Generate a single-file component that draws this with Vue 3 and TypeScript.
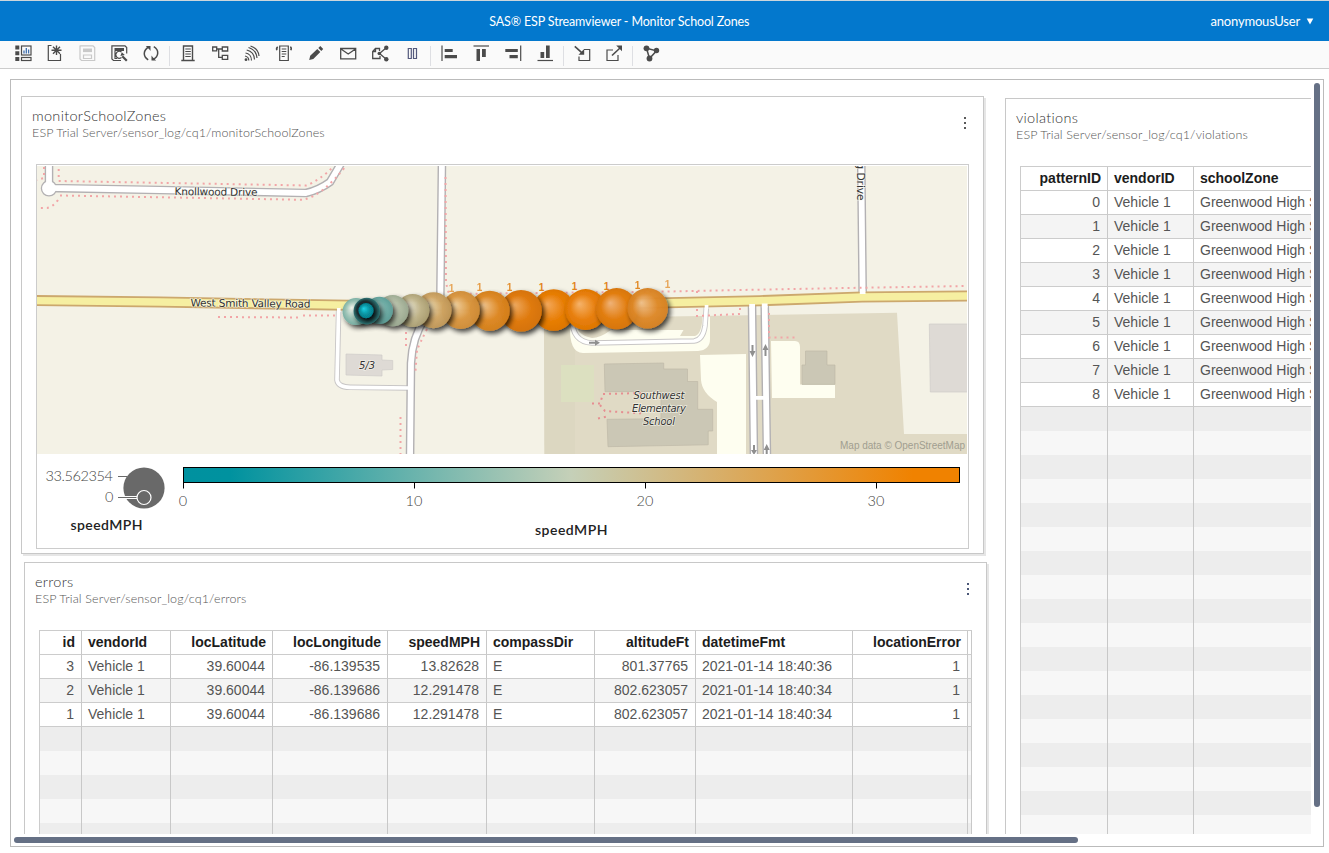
<script setup lang="ts">
interface Column { name: string; width: number; numeric: boolean }
interface Ball { x: number; y: number; r: number; light: string; base: string; edge: string; opacity: number }

const errorColumns: Column[] = [
  { name: 'id', width: 42, numeric: true },
  { name: 'vendorId', width: 89, numeric: false },
  { name: 'locLatitude', width: 102, numeric: true },
  { name: 'locLongitude', width: 115, numeric: true },
  { name: 'speedMPH', width: 99, numeric: true },
  { name: 'compassDir', width: 108, numeric: false },
  { name: 'altitudeFt', width: 101, numeric: true },
  { name: 'datetimeFmt', width: 157, numeric: false },
  { name: 'locationError', width: 115, numeric: true },
]
const errorRows: string[][] = [
  ['3', 'Vehicle 1', '39.60044', '-86.139535', '13.82628', 'E', '801.37765', '2021-01-14 18:40:36', '1'],
  ['2', 'Vehicle 1', '39.60044', '-86.139686', '12.291478', 'E', '802.623057', '2021-01-14 18:40:34', '1'],
  ['1', 'Vehicle 1', '39.60044', '-86.139686', '12.291478', 'E', '802.623057', '2021-01-14 18:40:34', '1'],
]
const violationColumns: Column[] = [
  { name: 'patternID', width: 87, numeric: true },
  { name: 'vendorID', width: 86, numeric: false },
  { name: 'schoolZone', width: 220, numeric: false },
]
const violationRows: string[][] = Array.from({ length: 9 }, (_, i) => [String(i), 'Vehicle 1', 'Greenwood High School'])

const balls: Ball[] = [
  { x: 553.7, y: 310, r: 20.8, light: '#f3a85a', base: '#e87e06', edge: '#dd7500', opacity: 1 },
  { x: 521, y: 310.7, r: 20.8, light: '#eea95f', base: '#df7a0e', edge: '#d47208', opacity: 1 },
  { x: 489.7, y: 310.7, r: 20, light: '#efc28c', base: '#dd8722', edge: '#d27e1c', opacity: 0.98 },
  { x: 460.7, y: 310, r: 19, light: '#efcf9f', base: '#da963f', edge: '#cc8a36', opacity: 0.97 },
  { x: 433.5, y: 310.2, r: 18, light: '#ecdcb8', base: '#cfa564', edge: '#bd9556', opacity: 0.97 },
  { x: 412.7, y: 310.5, r: 16.6, light: '#e9e6d6', base: '#bfb48a', edge: '#a89c70', opacity: 0.97 },
  { x: 392.7, y: 310.7, r: 15.6, light: '#e4e8dc', base: '#b0bca4', edge: '#98a68e', opacity: 0.97 },
  { x: 379.3, y: 310.3, r: 13.6, light: '#b9dad5', base: '#6eada6', edge: '#5b9c96', opacity: 0.97 },
  { x: 356, y: 311.5, r: 13.5, light: '#f2f3ec', base: '#9cc4b7', edge: '#72aba0', opacity: 0.97 },
  { x: 366.7, y: 311, r: 13.2, light: '#0c2226', base: '#14262a', edge: '#2a7a7a', opacity: 0.95 },
  { x: 366, y: 310.6, r: 7.6, light: '#1fd2e4', base: '#0792a0', edge: '#067e8b', opacity: 1 },
  { x: 585.7, y: 309.5, r: 20.4, light: '#f5b36b', base: '#e87f0d', edge: '#dd7500', opacity: 1 },
  { x: 616.7, y: 308.7, r: 20.6, light: '#efb277', base: '#e27e11', edge: '#d67508', opacity: 1 },
  { x: 647.7, y: 308.3, r: 20.2, light: '#efc08c', base: '#de8828', edge: '#d37e1e', opacity: 0.96 },
]
const countMarks = [
  { x: 451.5, y: 292, o: 0.7 }, { x: 479.5, y: 290.500, o: 0.8 }, { x: 509.5, y: 290.500, o: 0.9 }, { x: 541.5, y: 290.500, o: 1 },
  { x: 574.5, y: 289.500, o: 1 }, { x: 606.5, y: 289.500, o: 1 }, { x: 637.5, y: 288.500, o: 0.95 }, { x: 667.5, y: 287.500, o: 0.7 },
]
const ticks = [{ x: 183, v: 0 }, { x: 414, v: 10 }, { x: 645, v: 20 }, { x: 876, v: 30 }]

const template = (cols: Column[], tail = '') => cols.map(c => c.width + 'px').join(' ') + tail
</script>

<template>
  <div class="app">
    <header class="banner">
      <span class="banner-title">SAS® ESP Streamviewer - Monitor School Zones</span>
      <span class="user">anonymousUser<svg class="caret" viewBox="0 0 8 7"><path d="M.7 .5H7.300L4 6.500Z" /></svg></span>
    </header>

    <nav class="toolbar">
      <svg class="ic" viewBox="0 0 20 20"><path class="f" d="M2.300 2.500h4v4h-4zM2.300 8.300h4v4h-4zM2.300 14h4v4h-4z" /><rect class="s" x="8.500" y="3" width="9.500" height="9" /><rect class="s" x="8.500" y="14.500" width="9.500" height="3" /><path stroke="#3f6fae" stroke-width="1.300" d="M11 10.500V7.500M13.300 10.500V5M15.600 10.500V6.500" /></svg>
      <svg class="ic" viewBox="0 0 20 20"><path class="s" d="M6.500 2.500H3.300V17.500H15.500V11" /><path class="s" stroke-width="1.400" d="M11.500 2.500v9.500M6.500 7.300h10M8 3.800l7 7M15 3.800l-7 7" /></svg>
      <svg class="ic off" viewBox="0 0 20 20"><path class="s" d="M3.500 2.800H16L17.700 4.500V17.500H4.500L3 16V3z" /><rect class="f" x="6" y="5.500" width="9" height="3.600" /><path class="s" d="M6.500 15.500v-3.500h8v3.500z" /></svg>
      <svg class="ic" viewBox="0 0 20 20"><path class="s" d="M17.700 10.500V4.500L16 2.800H2.900V16L4.500 17.500H12" /><path class="f" d="M5.500 5h9.500v3H5.500zM12.800 9.300l3 2.800-4.400.9z" /><path class="s" d="M12.500 9a3.500 3.500 0 1 0 0 5.500M6 8v7.500h2" /><path class="s" stroke-width="2.200" d="M13.300 13.300l4.500 4.500" /></svg>
      <svg class="ic" viewBox="0 0 20 20"><path class="s" stroke-width="1.500" d="M7.200 16.800C1.700 13.500 2 7 8 4M12.800 3.700C18.300 7 18 13.500 12 16.500" /><path class="f" d="M4.800 3H9.500V8L8 6zM15.200 17.500H10.500V12.500L12 14.500z" /></svg>
      <i class="sep" />
      <svg class="ic" viewBox="0 0 20 20"><path class="s" stroke-width="1.400" d="M5.500 17V3H14.500V17M3.300 17.500H16.700" /><path class="s" d="M7.300 6h5.500M7.300 8.500h5.500M7.300 11h5.500M7.300 13.500h5.500" /></svg>
      <svg class="ic" viewBox="0 0 20 20"><path class="s" stroke-width="1.300" d="M2.700 4h4v3.800h-4zM12.300 4h5.400v4h-5.400zM12.300 12.300h5.400v4h-5.400zM6.700 6h5.600M8.700 6v8.300h3.600" /></svg>
      <svg class="ic" viewBox="0 0 20 20"><path class="s" stroke-width="1.200" d="M8.500 3C13.500 4.500 16.500 8 17 13M6.500 4.500C11.500 6 14.500 9.500 15 15M4.700 7C9 8 12.300 11.500 12.500 16.500M3.500 10C7 10.500 9.500 13.500 9.500 17.500M3 13C5.500 13.500 6.800 15.200 6.800 17.500" /><circle class="f" cx="4" cy="16.700" r="1.400" /></svg>
      <svg class="ic" viewBox="0 0 20 20"><path class="s" stroke-width="1.200" d="M5.700 3H14.300V17.500H5.700zM7.700 6h4.600M7.700 8.500h4.600M7.700 11h4.600M7.700 13.500h3" /><path class="s" stroke-width="1.600" d="M3.800 4Q2 5 2.900 7.300M16.200 4Q17.900 4.500 16.800 7.300" /></svg>
      <svg class="ic" viewBox="0 0 20 20"><path class="f" d="M3.200 17L4.200 12.800L11.300 6L14.300 9L7.300 16zM12.300 5L14.300 3.100L17.200 6L15.300 8z" /></svg>
      <svg class="ic" viewBox="0 0 20 20"><path class="s" stroke-width="1.300" d="M2.700 5.500H17.700V15.800H2.700zM3 6L10.200 11L17.500 6" /></svg>
      <svg class="ic" viewBox="0 0 20 20"><path class="s" stroke-width="1.300" d="M9.500 8V5.500H5.500L2.700 8.500V15.500H10V13M5.500 5.500V8.500H2.800M9.500 10.500L16 5M9.500 10.500L16 16" /><circle class="f" cx="16.300" cy="4.800" r="2.200" /><circle class="f" cx="16.300" cy="16.200" r="2.200" /><circle class="f" cx="9.300" cy="10.500" r="1.800" /></svg>
      <svg class="ic" viewBox="0 0 20 20"><path fill="none" stroke="#54597c" stroke-width="1.200" d="M6.300 5.500h3v10h-3zM11.500 5.500h3v10h-3z" /></svg>
      <i class="sep" />
      <svg class="ic" viewBox="0 0 20 20"><path class="s" d="M3 2.500V18" /><path class="f" d="M5.700 6h8v3h-8zM5.700 12H18v3.200H5.700z" /></svg>
      <svg class="ic" viewBox="0 0 20 20"><path class="s" d="M2.500 3H18" /><path class="f" d="M5.500 6h3.500V18H5.500zM11 6h3.800V14H11z" /></svg>
      <svg class="ic" viewBox="0 0 20 20"><path class="s" d="M17.700 2.500V18" /><path class="f" d="M2.300 6h12.500v3H2.300zM6.500 12h8.300v3.200H6.500z" /></svg>
      <svg class="ic" viewBox="0 0 20 20"><path class="s" d="M2.500 17.500H18" /><path class="f" d="M5.500 9h3.700V15H5.500zM11 2.500h3.700V15H11z" /></svg>
      <i class="sep" />
      <svg class="ic" viewBox="0 0 20 20"><path class="s" d="M12 6.500H17.700V17.500H7V13.500" /><path class="s" stroke-width="1.600" d="M2.800 3.300L10 9.800" /><path class="f" d="M12.200 11.700V6L6.500 11.700z" /></svg>
      <svg class="ic" viewBox="0 0 20 20"><path class="s" d="M9 7H3V17.500H14V12" /><path class="s" stroke-width="1.600" d="M8 12.500L16 5" /><path class="f" d="M18 2.500V8.300L12.200 2.500z" /></svg>
      <i class="sep" />
      <svg class="ic" viewBox="0 0 20 20"><path class="s" stroke-width="1.500" d="M5.500 5.300L15.500 7.800L8.500 15.500z" /><circle class="f" cx="5.500" cy="5.300" r="2.900" /><circle class="f" cx="15.500" cy="7.500" r="2.700" /><circle class="f" cx="8.500" cy="15.500" r="2.900" /></svg>
    </nav>

    <main class="frame">
      <div class="viewport">
        <div class="left">
          <section class="card zones">
            <div class="head">
              <div><h2>monitorSchoolZones</h2><p>ESP Trial Server/sensor_log/cq1/monitorSchoolZones</p></div>
              <svg class="dots" viewBox="0 0 4 14"><path d="M1 1h2v2H1zM1 6h2v2H1zM1 11h2v2H1z" /></svg>
            </div>
            <div class="chart">
              <svg class="map" viewBox="37 166 930 288">
                <defs>
                  <radialGradient v-for="(b, i) in balls" :id="'ball' + i" :key="i" cx=".5" cy=".5" r=".52" fx=".34" fy=".36">
                    <stop offset="0" :stop-color="b.light" /><stop offset=".6" :stop-color="b.base" /><stop offset="1" :stop-color="b.edge" />
                  </radialGradient>
                  <filter id="shade" x="-40%" y="-40%" width="190%" height="200%"><feDropShadow dx="2.500" dy="3" stdDeviation="2.600" flood-color="#000" flood-opacity=".75" /></filter>
                </defs>
                <rect x="37" y="166" width="930" height="288" fill="#f4f2e6" />
                <path fill="#e0dac5" d="M544 318L668 316.500L897 312.700L904 434H967V454H544.500z" />
                <path fill="#dcd7c1" d="M544 318H575V454H544.500z" />
                <path fill="#dedad5" stroke="#cfcbc8" stroke-width=".7" d="M929.300 324H968V392H930.300zM346 354L382 355V360L392.700 360.500V369.500L382 370V376L346 375z" />
                <path fill="#dce0c0" d="M561 365H594V402H561z" />
                <path fill="#fefef0" d="M570 325Q569 353 583 353L698 351Q710 350 710 339V316H702.500Q702 334 695 336H680L683.500 330H611Q600 338 592 338Q575 335 575 318z" />
                <path fill="#fefef0" d="M700 355L746 354V454H717V402Q702 393 701 380zM771 341H795Q800 341 800 347V384.500H835V398H772z" />
                <path fill="#cbc7b5" stroke="#beb9a7" stroke-width=".7" d="M604.300 364L663.700 363V369H687.500V381.500H697.700V409.300H712.700V431H708.200V444.800L608 446.700L607 419.300L661 418.700V391.400L605 391.700z" />
                <path fill="#cbc7b5" stroke="#beb9a7" stroke-width=".7" d="M805.500 351H827V365H835V384.400H802V365H805.500z" />
                <g fill="none" stroke="#c8c6c6" stroke-width="5.500"><path d="M338.700 308L337 380Q338 387 350 387.300L408 388M572 318Q572 342 592 343L694 341Q703 340 705 326L706.500 305" /></g>
                <g fill="none" stroke="#b3b1b3" stroke-width="8.600">
                  <path d="M49 160V188L160 190L306 193Q319 190 330 182L343 160M442 160L440.300 300M425 318Q412 338 411 363L410 460M861.200 160L862.700 296M752 304L754 460M764.700 303L767 460" />
                </g>
                <circle cx="49" cy="188.300" r="7.600" fill="#fff" stroke="#b3b1b3" stroke-width="1.300" />
                <g fill="none" stroke="#fff" stroke-width="3.700"><path d="M338.700 307L337 380Q338 387 350 387.300L411 388M572 318Q572 342 592 343L694 341Q703 340 705 326L706.500 304M752 397.800H768" /></g>
                <g fill="none" stroke="#fff" stroke-width="5.800">
                  <path d="M49 160V188L160 190L306 193Q319 190 330 182L343 160M442 160L440.300 300M425 318Q412 338 411 363L410 460M861.200 160L862.700 296M752 304L754 460M764.700 303L767 460" />
                </g>
                <g fill="none" stroke="#f2a5a7" stroke-width="2" stroke-dasharray="2 4">
                  <path d="M58.700 169V181L306 185.500Q319 181 334 166M44 167V178L37 180M60 195.500L303 199.800Q322 196 346 166M58 200Q53 207 47 208H38" />
                  <path d="M445.500 177L446 283L449 294L668 291.500L740 290L847 288L967 286M697 291V316L740 314V306" />
                  <path d="M218 317L300 317.500M303 315.500H335M406 332V346M427 329Q420 343 417 350L415.500 371M400.500 417V454M769 313V337.500H795" />
                </g>
                <path fill="none" stroke="#e68e91" stroke-width="2" stroke-dasharray="2 4" d="M592 403.500H600L603 394L643 393M600 405L605 411L643 413.500M598 418.500L609 416" />
                <path fill="none" stroke="#cca86d" stroke-width="11" d="M30 300.500L160 302L350 305.300L500 306L668 302.700L760 300.700L862 297L970 296" />
                <path fill="none" stroke="#f6efa1" stroke-width="7.400" d="M30 300.500L160 302L350 305.300L500 306L668 302.700L760 300.700L862 297L970 296" />
                <path fill="#fff" d="M749.200 304h5.800v4h-5.800zM761.800 303.500h5.800v4h-5.800zM704.700 305h3.700v4h-3.700zM859.800 291h5.700v3h-5.700zM337 308h3.600v4H337z" />
                <g fill="#8f8f8f"><path d="M751.500 345h2v6h2l-3 6-3-6h2zM764.500 356h2v-6h2l-3-6-3 6h2zM753 445h2v5h2l-3 5-3-5h2zM765.700 455h2v-5h2l-3-6-3 6h2zM589 341.800h6v-2l5 3-5 3v-2h-6z" /></g>
                <g class="road">
                  <text transform="rotate(.6 216 195)" x="174.500" y="195.500" textLength="83">Knollwood Drive</text>
                  <text transform="rotate(.6 250 306)" x="190.500" y="307" textLength="120">West Smith Valley Road</text>
                  <text transform="translate(857 200.500) rotate(90)" text-anchor="end">g Drive</text>
                </g>
                <g class="place">
                  <text x="367" y="369">5/3</text><text x="659" y="399" textLength="51">Southwest</text><text x="659" y="412" textLength="54">Elementary</text><text x="659" y="425" textLength="32">School</text>
                </g>
                <g class="marks"><text v-for="(m, i) in countMarks" :key="i" :x="m.x" :y="m.y" :opacity="m.o">1</text></g>
                <circle v-for="(b, i) in balls" :key="'b' + i" :cx="b.x" :cy="b.y" :r="b.r" :fill="'url(#ball' + i + ')'" :opacity="b.opacity" filter="url(#shade)" />
                <text class="credit" x="840" y="449" textLength="125">Map data © OpenStreetMap</text>
              </svg>
              <svg class="legend" viewBox="37 454 930 94">
                <defs><linearGradient id="ramp"><stop offset="0" stop-color="#00919f" /><stop offset=".06" stop-color="#00929f" /><stop offset=".5" stop-color="#c5d0b8" /><stop offset=".94" stop-color="#f08200" /><stop offset="1" stop-color="#f08200" /></linearGradient></defs>
                <circle cx="144" cy="488" r="20.600" fill="#696969" />
                <path fill="none" stroke="#696969" d="M118 476.500H127M118 497.500H125" />
                <path stroke="#fff" stroke-width="3" d="M125 497.500H137" /><path stroke="#696969" d="M118 497.500H137" />
                <circle cx="144" cy="497.500" r="7" fill="#696969" stroke="#fff" stroke-width="1.200" />
                <rect x="183.500" y="467.500" width="776" height="15" fill="url(#ramp)" stroke="#000" />
                <g class="nums">
                  <text x="45.500" y="481" textLength="67.500">33.562354</text><text x="105" y="502">0</text>
                  <template v-for="t in ticks" :key="t.v"><path stroke="#000" :d="'M' + (t.x + .5) + ' 483V488.500'" /><text :x="t.x" y="506" text-anchor="middle">{{ t.v }}</text></template>
                </g>
                <g class="names"><text x="70.500" y="530" textLength="72">speedMPH</text><text x="535" y="535" textLength="72.500">speedMPH</text></g>
              </svg>
            </div>
          </section>

          <section class="card errors">
            <div class="head">
              <div><h2>errors</h2><p>ESP Trial Server/sensor_log/cq1/errors</p></div>
              <svg class="dots blue" viewBox="0 0 4 14"><path d="M1 1h2v2H1zM1 6h2v2H1zM1 11h2v2H1z" /></svg>
            </div>
            <div class="table">
              <div class="row th" :style="{ gridTemplateColumns: template(errorColumns, ' 4px') }">
                <span v-for="c in errorColumns" :key="c.name" :class="{ num: c.numeric }">{{ c.name }}</span><span class="tail" />
              </div>
              <div v-for="(r, i) in errorRows" :key="i" class="row td" :style="{ gridTemplateColumns: template(errorColumns, ' 4px') }">
                <span v-for="(v, j) in r" :key="j" :class="{ num: errorColumns[j].numeric }">{{ v }}</span><span class="tail" />
              </div>
              <div v-for="n in 5" :key="'e' + n" class="row empty" :style="{ gridTemplateColumns: template(errorColumns, ' 4px') }">
                <span v-for="c in errorColumns" :key="c.name" /><span />
              </div>
            </div>
          </section>
        </div>

        <section class="card violations">
          <div class="head">
            <div><h2>violations</h2><p>ESP Trial Server/sensor_log/cq1/violations</p></div>
          </div>
          <div class="table">
            <div class="row th" :style="{ gridTemplateColumns: template(violationColumns) }">
              <span v-for="c in violationColumns" :key="c.name" :class="{ num: c.numeric }">{{ c.name }}</span>
            </div>
            <div v-for="(r, i) in violationRows" :key="i" class="row td" :style="{ gridTemplateColumns: template(violationColumns) }">
              <span v-for="(v, j) in r" :key="j" :class="{ num: violationColumns[j].numeric }">{{ v }}</span>
            </div>
            <div v-for="n in 18" :key="'e' + n" class="row empty" :style="{ gridTemplateColumns: template(violationColumns) }">
              <span v-for="c in violationColumns" :key="c.name" />
            </div>
          </div>
        </section>
      </div>
      <div class="vbar"><i /></div>
      <div class="hbar"><i /></div>
    </main>
  </div>
</template>

<style>
body { background: #fff; overflow: hidden; }
</style>

<style scoped>
* { box-sizing: border-box; }
.app { height: 853px; display: flex; flex-direction: column; font-family: Lato, "Open Sans", sans-serif; background: #fff; }
.banner { flex: none; height: 41px; border-top: 1px solid #ccd6dc; background: #0378cd; color: #fff; display: grid; grid-template-columns: 1fr auto; align-items: center; font-size: 13px; }
.banner-title { text-align: center; padding-left: 28px; font-size: 12.500px; letter-spacing: -.15px; }
.user { display: flex; align-items: center; gap: 6px; padding-right: 15px; letter-spacing: -.2px; }
.caret { width: 8px; height: 7px; fill: #fff; }
.toolbar { flex: none; height: 28px; background: #fafafa; border-bottom: 1px solid #ccc; padding: 2px 0 0 7px; display: flex; }
.ic { flex: none; width: 32px; height: 20px; stroke-width: 1.200px; }
.s { fill: none; stroke: #4b4b4b; }
.f { fill: #4b4b4b; }
.off .s { stroke: #c9c9c9; }
.off .f { fill: #c9c9c9; }
.sep { flex: none; width: 1px; height: 20px; margin: 3px 2px 0; background: #dedfe3; }
.frame { flex: 1; min-height: 0; margin: 10px 5px 6px 10px; border: 1px solid #bbb; display: grid; grid-template: 1fr 12px / 1fr 12px; }
.viewport { overflow: hidden; display: flex; align-items: flex-start; min-width: 0; min-height: 0; }
.left { flex: none; width: 994px; padding: 16px 0 0 10px; display: flex; flex-direction: column; gap: 8px; }
.card { background: #fff; border: 1px solid #c8c8c8; box-shadow: 2px 2px 0 #e6e6e6; padding: 0 14px; }
.zones { width: 963px; height: 458px; }
.errors { width: 963px; height: 320px; margin-left: 3px; }
.violations { flex: none; width: 420px; height: 800px; margin-top: 18px; }
.head { height: 67px; margin: 0 -14px; padding: 10px 16px 0 10px; display: flex; justify-content: space-between; }
h2 { margin: 0; font-size: 14.500px; line-height: 18px; font-weight: 300; letter-spacing: .3px; color: #333; white-space: nowrap; }
.head p { margin: 0; font-size: 12.500px; line-height: 15px; font-weight: 300; letter-spacing: .13px; color: #555; white-space: nowrap; }
.dots { width: 4px; height: 14px; margin-top: 9px; fill: #595959; }
.blue { fill: #4c5878; }
.chart { width: 933px; height: 385px; border: 1px solid #ccc; padding-top: 1px; display: flex; flex-direction: column; }
.map { display: block; width: 930px; height: 288px; }
.legend { display: block; width: 930px; height: 94px; }
.road text, .place text { font-family: "DejaVu Sans", sans-serif; font-size: 10.500px; fill: #333; stroke: #f8f7ee; stroke-width: 1.500px; stroke-opacity: .7; paint-order: stroke; }
.place text { font-style: italic; text-anchor: middle; font-size: 10px; }
.marks text { font: bold 10px "Liberation Sans", sans-serif; fill: #e2851c; text-anchor: middle; }
.credit { font: 10px "Liberation Sans", sans-serif; fill: #a09e90; }
.nums text { font: 300 14.500px Lato, sans-serif; fill: #444; }
.names text { font: 600 14px Lato, sans-serif; fill: #222; }
.table { border-top: 1px solid #ccc; border-left: 1px solid #ccc; width: max-content; font-family: "Liberation Sans", Arial, sans-serif; font-size: 14px; }
.row { display: grid; height: 24px; }
.row span { border-right: 1px solid #c8c8c8; border-bottom: 1px solid #ccc; padding: 0 6px; line-height: 23px; color: #555; white-space: nowrap; overflow: hidden; }
.row .num { text-align: right; }
.row.td .num { padding-right: 7px; }
.row.th span { font-weight: 700; color: #1c1c1c; }
.td:nth-child(odd) { background: #f4f4f4; }
.td .tail { background: #f7f7f7; }
.td:nth-child(odd) .tail { background: #ededed; }
.row .tail { padding: 0; }
.row.empty span { border-bottom: 0; padding: 0; }
.empty:nth-child(odd) { background: #ededed; }
.empty:nth-child(even) { background: #f7f7f7; }
.vbar { padding: 3px 0 0 3px; }
.vbar i { display: block; width: 6px; height: 724px; border-radius: 3px; background: #657085; }
.hbar { padding: 3px 0 0 3px; }
.hbar i { display: block; width: 1064px; height: 6px; border-radius: 3px; background: #657085; }
</style>
